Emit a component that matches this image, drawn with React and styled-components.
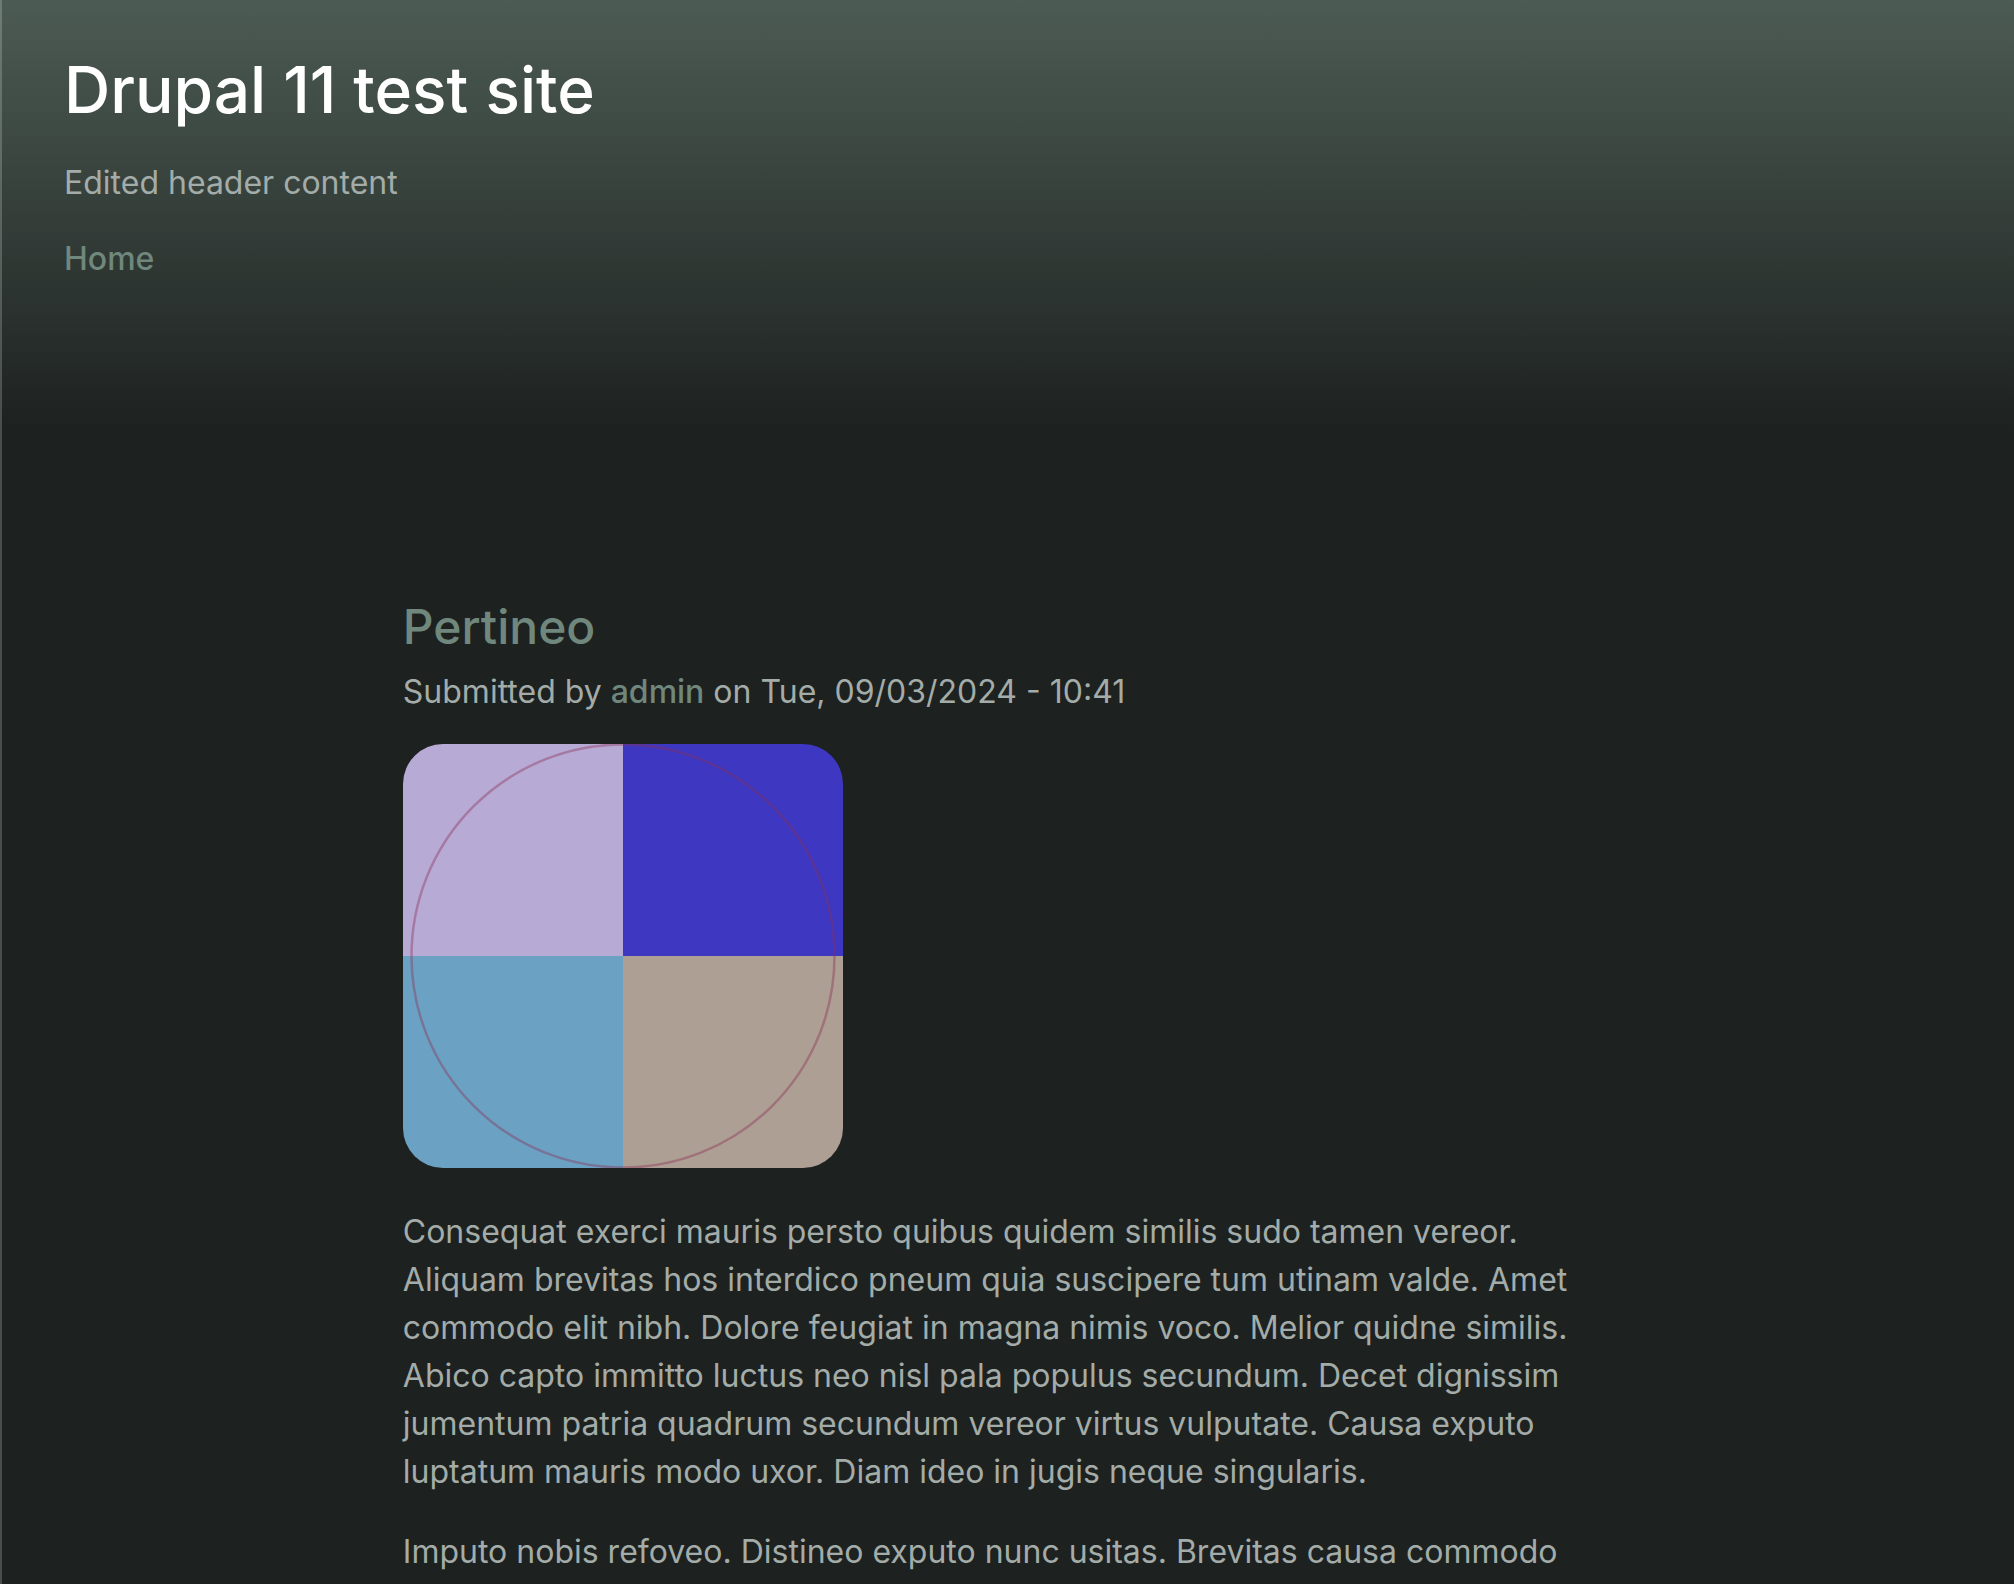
import React from "react";
import styled, { createGlobalStyle } from "styled-components";

const GlobalStyle = createGlobalStyle`
  *, *::before, *::after { box-sizing: border-box; }
  html { background: #1d2120; }
  body {
    margin: 0;
    color: #a3aca8;
    font: 400 32px/48px Inter, "Liberation Sans", sans-serif;
  }
`;

const Page = styled.div`
  height: 100vh;
  overflow: hidden;
  background: linear-gradient(180deg, #4c5b53 0, #1d2120 432px);
  box-shadow: inset 2px 0 0 rgba(255, 255, 255, 0.2);
`;

const Header = styled.header`
  display: flex;
  flex-direction: column;
  align-items: flex-start;
  gap: 28px;
  padding: 48px 64px 0;
`;

const SiteName = styled.h1`
  margin: 0;
  color: #fff;
  font-size: 64px;
  font-weight: 500;
  line-height: 83px;
`;

const Paragraph = styled.p`
  margin: 0;
`;

const TextLink = styled.a`
  color: #6f877c;
  font-weight: 500;
  text-decoration: none;
`;

const Main = styled.main`
  width: 60%;
  margin: 0 auto;
  padding-top: 313px;
`;

const PostTitle = styled.h2`
  margin: 0 0 10px;
  font-size: 48px;
  font-weight: 500;
  line-height: 62px;
`;

const Picture = styled.svg`
  display: block;
  width: 440px;
  height: 424px;
  margin: 28px 0 40px;
  border-radius: 40px;
`;

const Body = styled.div`
  display: grid;
  gap: 32px;
`;

const paragraphs = [
  "Consequat exerci mauris persto quibus quidem similis sudo tamen vereor. Aliquam brevitas hos interdico pneum quia suscipere tum utinam valde. Amet commodo elit nibh. Dolore feugiat in magna nimis voco. Melior quidne similis. Abico capto immitto luctus neo nisl pala populus secundum. Decet dignissim jumentum patria quadrum secundum vereor virtus vulputate. Causa exputo luptatum mauris modo uxor. Diam ideo in jugis neque singularis.",
  "Imputo nobis refoveo. Distineo exputo nunc usitas. Brevitas causa commodo",
];

export default function App() {
  return (
    <>
      <GlobalStyle />
      <Page>
        <Header>
          <SiteName>Drupal 11 test site</SiteName>
          <Paragraph>Edited header content</Paragraph>
          <nav>
            <TextLink href="#home">Home</TextLink>
          </nav>
        </Header>
        <Main>
          <article>
            <PostTitle>
              <TextLink href="#pertineo">Pertineo</TextLink>
            </PostTitle>
            <Paragraph>
              Submitted by <TextLink href="#admin">admin</TextLink> on Tue, 09/03/2024 - 10:41
            </Paragraph>
            <Picture viewBox="0 0 440 424" aria-hidden="true">
              <rect width="220" height="212" fill="#b7abd5" />
              <rect x="220" width="220" height="212" fill="#3d37c2" />
              <rect y="212" width="220" height="212" fill="#6ba2c3" />
              <rect x="220" y="212" width="220" height="212" fill="#ae9f94" />
              <circle cx="220" cy="212" r="211.5" fill="none" stroke="#8a3055" strokeOpacity="0.4" strokeWidth="2.5" />
            </Picture>
            <Body>
              {paragraphs.map((text) => (
                <Paragraph key={text}>{text}</Paragraph>
              ))}
            </Body>
          </article>
        </Main>
      </Page>
    </>
  );
}
